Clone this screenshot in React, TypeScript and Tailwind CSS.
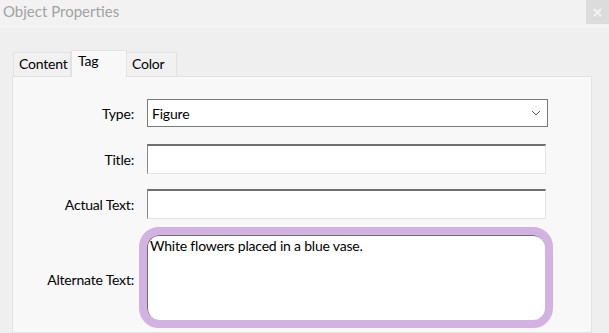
import React from "react";

export default function App() {
  const font = { fontFamily: "Lato, 'Open Sans', sans-serif" };
  return (
    <div
      className="w-[609px] h-[333px] bg-[#efefef] overflow-hidden flex flex-col text-black tracking-[-0.2px]"
      style={font}
    >
      {/* Title bar */}
      <div className="h-[28px] bg-[#f2f2f2] flex justify-between items-start shrink-0">
        <span className="pl-[3px] pt-[1px] text-[15px] leading-[20px] text-[#a3a3a3] tracking-normal">
          Object Properties
        </span>
        <div className="w-[23px] h-[24px] bg-[#dcdcdc] flex items-center justify-center">
          <svg width="9" height="9" viewBox="0 0 9 9">
            <path d="M1 1 L8 8 M8 1 L1 8" stroke="#f3f3f3" strokeWidth="1.8" />
          </svg>
        </div>
      </div>

      {/* Tabs */}
      <div className="pt-[21px] pl-[13px] flex items-end h-[48px] shrink-0">
        <div className="w-[58px] h-[24px] border border-b-0 border-[#e2e2e2] bg-[#f1f1f1] text-[14px] leading-[22px] pl-[5px]">
          Content
        </div>
        <div className="w-[56px] h-[27px] border border-b-0 border-[#e2e2e2] bg-[#f8f8f8] text-[14px] leading-[20px] pl-[6px] relative top-[1px] z-10">
          Tag
        </div>
        <div className="w-[50px] h-[24px] border border-b-0 border-l-0 border-[#e2e2e2] bg-[#f1f1f1] text-[14px] leading-[22px] pl-[5px]">
          Color
        </div>
      </div>

      {/* Panel */}
      <div className="ml-[12px] w-[580px] flex-1 border border-[#e2e2e2] bg-[#f8f8f8] pt-[22px] text-[14px]">
        <div className="flex items-center h-[28px]">
          <div className="w-[121px] text-right">Type:</div>
          <div className="ml-[13px] w-[401px] h-[28px] bg-white border border-[#7a7a7a] flex items-center justify-between pl-[4px] pr-[6px]">
            <span>Figure</span>
            <svg width="10" height="6" viewBox="0 0 10 6">
              <path d="M1 1 L5 5 L9 1" stroke="#555" strokeWidth="1" fill="none" />
            </svg>
          </div>
        </div>

        <div className="flex items-center h-[30px] mt-[17px]">
          <div className="w-[121px] text-right">Title:</div>
          <div className="ml-[13px] w-[399px] h-[30px] bg-white border-t-2 border-l border-t-[#6f6f6f] border-l-[#8a8a8a] border-r border-b border-r-[#e3e3e3] border-b-[#e3e3e3]" />
        </div>

        <div className="flex items-center h-[30px] mt-[15px]">
          <div className="w-[121px] text-right">Actual Text:</div>
          <div className="ml-[13px] w-[399px] h-[30px] bg-white border-t-2 border-l border-t-[#6f6f6f] border-l-[#8a8a8a] border-r border-b border-r-[#e3e3e3] border-b-[#e3e3e3]" />
        </div>

        <div className="flex items-center mt-[16px]">
          <div className="w-[121px] text-right pt-[4px]">Alternate Text:</div>
          <div className="ml-[13px] w-[398px] h-[85px] bg-white rounded-[12px] border-t border-l border-t-[#6f6f6f] border-l-[#6f6f6f] outline-[8px] outline-solid outline-[#d2b1e3] pl-[2px] pt-[1px] leading-[18px]">
            White flowers placed in a blue vase.
          </div>
        </div>
      </div>
    </div>
  );
}
